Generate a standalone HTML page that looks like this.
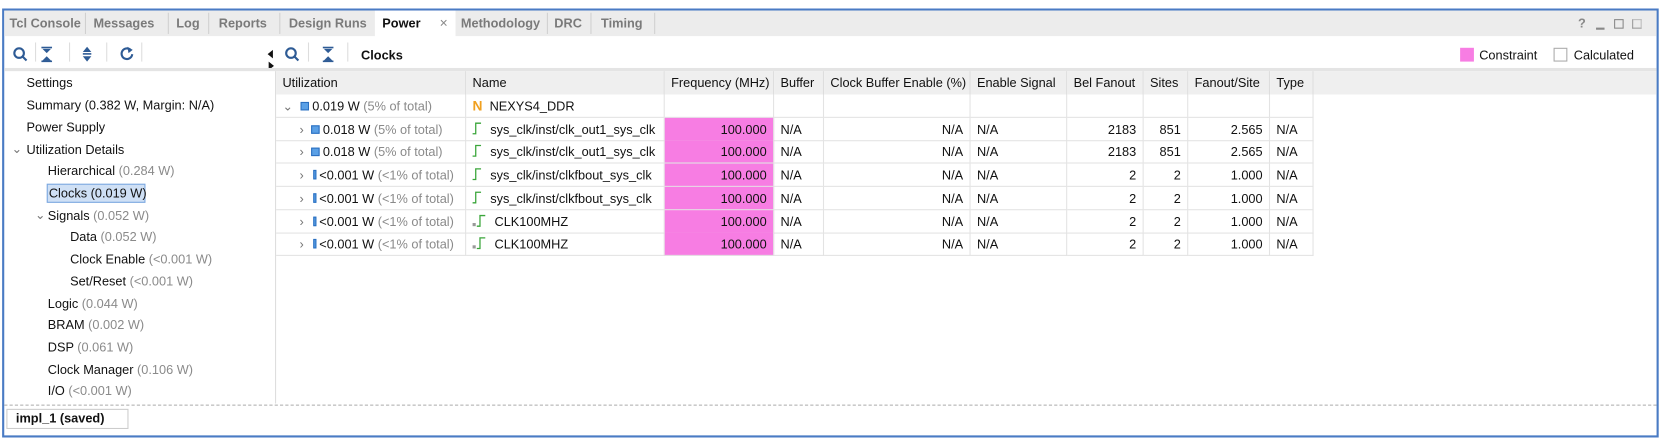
<!DOCTYPE html>
<html><head><meta charset="utf-8"><style>
*{box-sizing:border-box;margin:0;padding:0}
html,body{width:1665px;height:440px;overflow:hidden;background:#fff}
body{font-family:"Liberation Sans",Arial,sans-serif;font-size:12px;color:#111}
#w{position:absolute;left:0;top:0;width:1568px;height:414px;transform:scale(1.0619);transform-origin:0 0}
.a{position:absolute}
#frame{left:2px;top:8px;width:1560px;height:404px;border:2px solid #4a7bc4;background:#fff}
#tabs{left:4px;top:10px;width:1556px;height:24px;background:#ececec}
.tab{position:absolute;top:10px;height:24px;line-height:24px;color:#7a7a7a;font-weight:bold;font-size:12px}
.sep{position:absolute;top:12px;width:1px;height:20px;background:#d0d0d0}
.tsep{position:absolute;width:1px;height:18px;background:#ddd;top:40px}
.t{position:absolute;white-space:nowrap;line-height:14px}
.g{color:#8a8a8a}
.hd{position:absolute;top:67px;height:22px;line-height:22px;background:#efefef;border-right:1px solid #ddd;padding-left:6px;white-space:nowrap}
.cell{position:absolute;height:22px;line-height:22px;border-right:1px solid #e3e3e3;border-bottom:1px solid #e3e3e3;white-space:nowrap;padding:0 6px}
.r{text-align:right}
.pk{background:#f77de3}
</style></head><body><div id="w">
<div class="a" id="frame"></div>
<div class="a" id="tabs"></div>
<div class="tab" style="left:9px">Tcl Console</div><div class="sep" style="left:80px"></div>
<div class="tab" style="left:88px">Messages</div><div class="sep" style="left:158px"></div>
<div class="tab" style="left:166px">Log</div><div class="sep" style="left:196px"></div>
<div class="tab" style="left:206px">Reports</div><div class="sep" style="left:263px"></div>
<div class="tab" style="left:272px">Design Runs</div>
<div class="a" style="left:353px;top:10px;width:76px;height:25px;background:#fff"></div>
<div class="tab" style="left:360px;color:#111">Power</div>
<div class="tab" style="left:414px;color:#888;font-weight:normal;font-size:13px">×</div>
<div class="tab" style="left:434px">Methodology</div><div class="sep" style="left:515px"></div>
<div class="tab" style="left:522px">DRC</div><div class="sep" style="left:556px"></div>
<div class="tab" style="left:566px">Timing</div><div class="sep" style="left:616px"></div>
<div class="tab" style="left:1486px;color:#888">?</div>
<div class="a" style="left:1503px;top:26px;width:8px;height:2px;background:#888"></div>
<div class="a" style="left:1520px;top:18px;width:9px;height:9px;border:1.5px solid #888"></div>
<div class="a" style="left:1537px;top:18px;width:9px;height:9px;border:1.5px solid #999;border-top-color:#bbb;border-right-color:#bbb"></div>

<!-- left toolbar -->
<svg class="a" style="left:10px;top:42px" width="130" height="18" viewBox="0 0 130 18">
<g fill="none" stroke="#2e5b95" stroke-width="2"><circle cx="8" cy="8" r="4.5"/><path d="M11 11l4 4"/></g>
<g fill="#2e5b95"><rect x="29" y="2" width="10" height="1.5"/><path d="M30 4h8l-4 4z"/><path d="M30 15h8l-4-4z"/><rect x="29" y="15" width="10" height="1.5"/>
<path d="M72 2l4 5h-8z"/><rect x="68" y="8" width="8" height="1.5"/><path d="M72 16l4-5h-8z"/></g>
<path d="M113 5a5 5 0 1 0 1.5 4" fill="none" stroke="#2e5b95" stroke-width="2"/><path d="M110 2l5 3-4 3z" fill="#2e5b95"/>
</svg>
<div class="tsep" style="left:33px"></div><div class="tsep" style="left:65px"></div><div class="tsep" style="left:100px"></div><div class="tsep" style="left:133px"></div>
<svg class="a" style="left:251px;top:46px" width="8" height="22"><path d="M6 1v8l-5-4z M2 12v8l5-4z" fill="#111"/></svg>
<!-- right toolbar -->
<svg class="a" style="left:266px;top:42px" width="60" height="18">
<g fill="none" stroke="#2e5b95" stroke-width="2"><circle cx="8" cy="8" r="4.5"/><path d="M11 11l4 4"/></g>
<g fill="#2e5b95"><rect x="38" y="2" width="10" height="1.5"/><path d="M39 4h8l-4 4z"/><path d="M39 15h8l-4-4z"/><rect x="38" y="15" width="10" height="1.5"/></g>
</svg>
<div class="tsep" style="left:290px"></div><div class="tsep" style="left:327px"></div>
<div class="t" style="left:340px;top:45px;font-weight:bold">Clocks</div>
<div class="a pk" style="left:1375px;top:45px;width:13px;height:13px"></div>
<div class="t" style="left:1393px;top:45px">Constraint</div>
<div class="a" style="left:1463px;top:45px;width:13px;height:13px;border:1px solid #aaa"></div>
<div class="t" style="left:1482px;top:45px">Calculated</div>
<div class="a" style="left:4px;top:64px;width:1556px;height:3px;background:#e4e4e4"></div>

<!-- left tree -->
<div class="a" style="left:259px;top:67px;width:1px;height:313px;background:#ddd"></div>
<div class="t" style="left:25px;top:71px">Settings</div>
<div class="t" style="left:25px;top:92px">Summary (0.382 W, Margin: N/A)</div>
<div class="t" style="left:25px;top:113px">Power Supply</div>
<div class="t" style="left:11px;top:133px;color:#777">⌄</div>
<div class="t" style="left:25px;top:134px">Utilization Details</div>
<div class="t" style="left:45px;top:154px">Hierarchical <span class="g">(0.284 W)</span></div>
<div class="a" style="left:44px;top:173px;width:93px;height:18px;background:#cfe0f5;border:1px solid #7aa7e0"></div>
<div class="t" style="left:46px;top:175px">Clocks (0.019 W)</div>
<div class="t" style="left:33px;top:195px;color:#777">⌄</div>
<div class="t" style="left:45px;top:196px">Signals <span class="g">(0.052 W)</span></div>
<div class="t" style="left:66px;top:216px">Data <span class="g">(0.052 W)</span></div>
<div class="t" style="left:66px;top:237px">Clock Enable <span class="g">(&lt;0.001 W)</span></div>
<div class="t" style="left:66px;top:258px">Set/Reset <span class="g">(&lt;0.001 W)</span></div>
<div class="t" style="left:45px;top:279px">Logic <span class="g">(0.044 W)</span></div>
<div class="t" style="left:45px;top:299px">BRAM <span class="g">(0.002 W)</span></div>
<div class="t" style="left:45px;top:320px">DSP <span class="g">(0.061 W)</span></div>
<div class="t" style="left:45px;top:341px">Clock Manager <span class="g">(0.106 W)</span></div>
<div class="t" style="left:45px;top:361px">I/O <span class="g">(&lt;0.001 W)</span></div>

<!-- table header -->
<div class="hd" style="left:260px;width:179px">Utilization</div>
<div class="hd" style="left:439px;width:187px">Name</div>
<div class="hd" style="left:626px;width:103px">Frequency (MHz)</div>
<div class="hd" style="left:729px;width:47px">Buffer</div>
<div class="hd" style="left:776px;width:138px">Clock Buffer Enable (%)</div>
<div class="hd" style="left:914px;width:91px">Enable Signal</div>
<div class="hd" style="left:1005px;width:72px">Bel Fanout</div>
<div class="hd" style="left:1077px;width:42px">Sites</div>
<div class="hd" style="left:1119px;width:77px">Fanout/Site</div>
<div class="hd" style="left:1196px;width:41px">Type</div>
<div class="hd" style="left:1237px;width:323px;border-right:none"></div>

<div id="rows"></div>
<script></script>
<!-- rows -->
<div style="position:absolute;left:0;top:0">
<!-- row 0 -->
<div class="cell" style="left:260px;top:89px;width:179px;padding-left:6px"><span style="color:#777">⌄</span>&nbsp;&nbsp;<span style="display:inline-block;width:8px;height:8px;background:#5aa0e6;border:1px solid #2a6fc0;vertical-align:-0px"></span>&nbsp;0.019 W <span class="g">(5% of total)</span></div>
<div class="cell" style="left:439px;top:89px;width:187px"><b style="color:#f0a020;font-size:13px">N</b>&nbsp; NEXYS4_DDR</div>
<div class="cell" style="left:626px;top:89px;width:103px"></div><div class="cell" style="left:729px;top:89px;width:47px"></div><div class="cell" style="left:776px;top:89px;width:138px"></div><div class="cell" style="left:914px;top:89px;width:91px"></div><div class="cell" style="left:1005px;top:89px;width:72px"></div><div class="cell" style="left:1077px;top:89px;width:42px"></div><div class="cell" style="left:1119px;top:89px;width:77px"></div><div class="cell" style="left:1196px;top:89px;width:41px"></div>
</div>
<div id="body"></div>
<script>
var R=[["0.018 W","(5% of total)",1,"sys_clk/inst/clk_out1_sys_clk","2183","851","2.565",0],
["0.018 W","(5% of total)",1,"sys_clk/inst/clk_out1_sys_clk","2183","851","2.565",0],
["&lt;0.001 W","(&lt;1% of total)",0,"sys_clk/inst/clkfbout_sys_clk","2","2","1.000",0],
["&lt;0.001 W","(&lt;1% of total)",0,"sys_clk/inst/clkfbout_sys_clk","2","2","1.000",0],
["&lt;0.001 W","(&lt;1% of total)",0,"CLK100MHZ","2","2","1.000",1],
["&lt;0.001 W","(&lt;1% of total)",0,"CLK100MHZ","2","2","1.000",1]];
var h="";
R.forEach(function(r,i){var t=110.7+i*21.7;
var ic=r[2]?'<span style="display:inline-block;width:8px;height:8px;background:#5aa0e6;border:1px solid #2a6fc0"></span>&nbsp;':'<span style="display:inline-block;width:3px;height:9px;background:#5aa0e6;border:1px solid #2a6fc0;margin:0 3px 0 2px"></span>';
var clk='<svg width="'+(r[7]?14:10)+'" height="12" style="vertical-align:-1px">'+(r[7]?'<rect x="0" y="8" width="3" height="3" fill="#999"/>':'')+'<path d="'+(r[7]?'M4 11h3V1h5':'M0 11h3V1h5')+'" fill="none" stroke="#3aa53a" stroke-width="1.2"/></svg>&nbsp; ';
h+='<div class="cell" style="left:260px;top:'+t+'px;width:179px;padding-left:22px"><span style="color:#777">›</span>&nbsp;&nbsp;'+ic+r[0]+' <span class="g">'+r[1]+'</span></div>';
h+='<div class="cell" style="left:439px;top:'+t+'px;width:187px">'+clk+r[3]+'</div>';
h+='<div class="cell r pk" style="left:626px;top:'+t+'px;width:103px">100.000</div>';
h+='<div class="cell" style="left:729px;top:'+t+'px;width:47px">N/A</div>';
h+='<div class="cell r" style="left:776px;top:'+t+'px;width:138px">N/A</div>';
h+='<div class="cell" style="left:914px;top:'+t+'px;width:91px">N/A</div>';
h+='<div class="cell r" style="left:1005px;top:'+t+'px;width:72px">'+r[4]+'</div>';
h+='<div class="cell r" style="left:1077px;top:'+t+'px;width:42px">'+r[5]+'</div>';
h+='<div class="cell r" style="left:1119px;top:'+t+'px;width:77px">'+r[6]+'</div>';
h+='<div class="cell" style="left:1196px;top:'+t+'px;width:41px">N/A</div>';});
document.getElementById("body").innerHTML=h;
</script>
<!-- bottom -->
<div class="a" style="left:4px;top:381px;width:1556px;border-top:1px dashed #aaa"></div>
<div class="a" style="left:6px;top:385px;width:115px;height:19px;border:1px solid #ccc;background:#fff;font-weight:bold;line-height:17px;padding-left:8px">impl_1 (saved)</div>
</div></body></html>
